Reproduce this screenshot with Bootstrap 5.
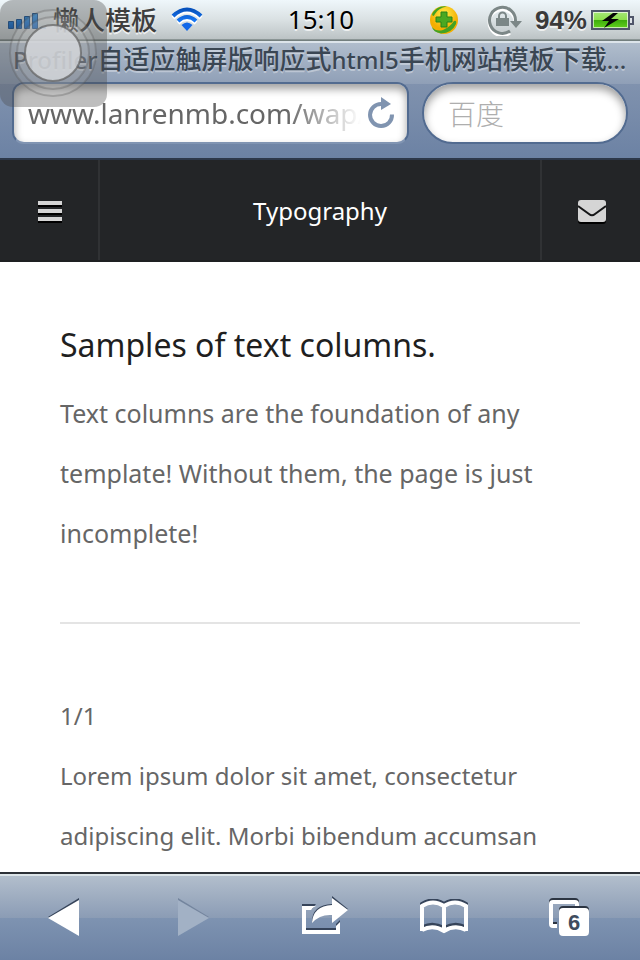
<!DOCTYPE html>
<html lang="zh-CN">
<head>
<meta charset="utf-8">
<meta name="viewport" content="width=device-width, initial-scale=1">
<title>Typography</title>
<link href="https://cdn.jsdelivr.net/npm/bootstrap@5.3.0/dist/css/bootstrap.min.css" rel="stylesheet">
<style>
body { font-family: "Noto Sans", "Noto Sans CJK SC", sans-serif; background: #fff; }
.plain-btn { background: none; border: 0; padding: 0; line-height: 1; }
svg { display: block; flex: none; }
.status-bar { height: 41px; background: linear-gradient(#eff7fb, #d9e0e2 50%, #bcc3c5 95%, #737f7e 97%); text-shadow: 0 2px 0 rgba(255,255,255,.7); padding: 0 6px 2px 8px; }
.status-bar .side { flex: 1 1 0; }
.status-bar .tray { gap: 28px; }
.carrier { font-size: 26px; line-height: 36px; padding: 0 14px 2px 7px; color: #3e3e3e; font-weight: 500; font-family: "Noto Sans CJK SC", sans-serif; }
.clock { font-size: 26px; line-height: 36px; padding-bottom: 2px; color: #000; }
.percent { font: bold 26px/36px "Liberation Sans", sans-serif; color: #3a3a3a; }
.browser-bar { background: linear-gradient(#dce4ea 2px, #b0bdcc 2px, #8f9fb7 43px, #8092ae 43px, #6c82a4); border-bottom: 2px solid #2d384a; }
.page-name { font-size: 24px; line-height: 36px; font-weight: 500; color: #3a4653; text-shadow: 0 2px 0 rgba(255,255,255,.35); padding: 0 12px 4px 13px; }
.page-name bdi { font-size: 26px; }
.fields { padding: 0 12px 14px; gap: 13px; }
.field { height: 62px; background: #fff; border: 2px solid #526b90; border-bottom-color: #8094b2; box-shadow: inset 0 5px 8px rgba(0,0,0,.38); }
.url-field { flex: 2 1 397px; min-width: 0; border-radius: 12px; padding: 0 12px 0 14px; }
.search-field { flex: 1 1 206px; min-width: 0; border-radius: 31px; border-bottom-color: #526b90; padding: 0 24px; }
.field input { width: 100%; min-width: 0; border: 0; background: none; padding: 0; outline: 0; font-size: 28px; line-height: 40px; color: #666; }
.url-field input { -webkit-mask-image: linear-gradient(to right, #000 calc(100% - 80px), transparent calc(100% - 6px)); mask-image: linear-gradient(to right, #000 calc(100% - 80px), transparent calc(100% - 6px)); }
.search-field input { font-weight: 300; font-family: "Noto Sans CJK SC", sans-serif; }
.search-field input::placeholder { color: #aeaeae; opacity: 1; }
.site-head { height: 102px; background: #232527; border-bottom: 2px solid #1e2022; padding-top: 2px; }
.site-head .head-btn { width: 100px; margin-top: -2px; padding: 4px 0 0 2px; }
.site-head .head-btn:first-child { border-right: 2px solid #303234; }
.site-head .head-btn:last-child { border-left: 2px solid #303234; }
.site-head h1 { font-size: 24px; line-height: 60px; color: #fff; font-weight: 400; }
.page-body { min-height: 0; overflow: hidden auto; scrollbar-width: none; padding: 53px 60px 0; color: #666; font-size: 24px; line-height: 60px; }
.page-body h2 { font-size: 32px; line-height: 60px; color: #1f1f1f; font-weight: 400; margin: 0 0 8px; }
.page-body p { margin: 0; }
.page-body .intro { font-size: 25px; }
.page-body hr { margin: 59px 0 62px; border-top: 2px solid #e4e4e4; opacity: 1; }
.tool-bar { display: grid; grid-template-columns: 127fr 132fr 132fr 106fr 143fr; align-items: center; height: 88px; background: linear-gradient(#dce4e8 2px, #b2becc 2px, #8b9cb5 44px, #7e93b1 44px, #6c82a4); border-top: 2px solid #2c3036; }
.tool-bar svg { margin: 0 auto; }
.touch-btn { left: 0; top: 0; z-index: 5; }
</style>
<script src="https://cdn.jsdelivr.net/npm/bootstrap@5.3.0/dist/js/bootstrap.bundle.min.js"></script>
</head>
<body class="vh-100 d-flex flex-column overflow-hidden position-relative">

<div class="status-bar d-flex align-items-center flex-shrink-0">
  <div class="side d-flex align-items-center">
    <svg width="38" height="20" viewBox="0 0 38 20" aria-label="Signal"><defs><linearGradient id="sig" x2="0" y2="1"><stop stop-color="#2d96ec"/><stop offset="1" stop-color="#0a5fc0"/></linearGradient></defs><g fill="url(#sig)" stroke="#144f91"><path d="M.5 11.500h5v7h-5zM8.500 9.500h5v9h-5zM16.500 6.500h5v12h-5zM24.500 3.500h5v15h-5z"/></g><path d="M32 17h6v2h-6z" fill="#367fc9"/></svg>
    <span class="carrier text-nowrap">懒人模板</span>
    <svg width="32" height="26" viewBox="0 0 32 26" aria-label="Wi-Fi"><defs><linearGradient id="wf" x2="0" y2="1"><stop stop-color="#0752bd"/><stop offset="1" stop-color="#1677f5"/></linearGradient></defs><g fill="none" stroke="#fff" stroke-width="4" transform="translate(0 2)"><path d="M2 9Q16-4 30 9M7 14Q16 6 25 14"/></g><g fill="none" stroke="url(#wf)" stroke-width="4"><path d="M2 9Q16-4 30 9M7 14Q16 6 25 14"/></g><path d="M10.500 18Q16 13 21.500 18L16 24z" fill="#1268e8"/></svg>
  </div>
  <span class="clock">15:10</span>
  <div class="side d-flex align-items-center justify-content-end">
    <div class="tray d-flex align-items-center">
    <svg width="30" height="30" viewBox="0 0 30 30" aria-label="Battery saver"><defs><radialGradient id="sun" cy=".3"><stop stop-color="#fff04c"/><stop offset="1" stop-color="#f4ae00"/></radialGradient></defs><circle cx="15" cy="15" r="14" fill="url(#sun)"/><path d="M3 9Q8 0 18 1.500Q9 3 6 9Q4 13 3 9zM27 19Q23 28 12 28.500Q4 27 3 22Q7 27 14 25Q21 22 25 16Q28 15 27 19z" fill="#43a224"/><path d="M12 7h6v5h5v5h-5v5h-6v-5H7v-5h5z" fill="#4aa822" stroke="#268318"/></svg>
    <svg width="36" height="32" viewBox="0 0 36 32" aria-label="Rotation lock"><path d="M23 27A13 13 0 1 1 28 15" transform="translate(0 2)" fill="none" stroke="#fff" stroke-width="3"/><path d="M23 27A13 13 0 1 1 28.500 17" fill="none" stroke="#7c8787" stroke-width="3"/><path d="M23 17h12l-6 7z" fill="#7c8787"/><path d="M9 14h13v8H9z" fill="#7c8787"/><path d="M12 14v-2a3.500 3.500 0 0 1 7 0v2" fill="none" stroke="#7c8787" stroke-width="2"/></svg>
    </div>
    <span class="percent ms-2 ps-1 pe-1">94%</span>
    <svg width="43" height="22" viewBox="0 0 43 22" aria-label="Charging"><defs><linearGradient id="bat" x2="0" y2="1"><stop stop-color="#a8e77e"/><stop offset=".48" stop-color="#8ee04d"/><stop offset=".5" stop-color="#3eac0d"/><stop offset="1" stop-color="#65d51f"/></linearGradient></defs><path d="M1 2h37v18H1z" fill="url(#bat)" stroke="#50566a" stroke-width="2"/><path d="M2.500 3.500h34v15h-34z" fill="none" stroke="#fff" stroke-opacity=".65"/><path d="M39 8h3v7h-3" fill="#dfe4e8" stroke="#50566a" stroke-width="2"/><path d="M22 4L11 12h7l-5 7 15-9h-8l7-6z" fill="#050505"/></svg>
  </div>
</div>

<div class="browser-bar flex-shrink-0">
  <div class="page-name text-nowrap overflow-hidden">Profiler<bdi>自适应触屏版响应式</bdi>html5<bdi>手机网站模板下载</bdi>...</div>
  <div class="fields d-flex">
    <div class="field url-field d-flex align-items-center">
      <input type="text" value="www.lanrenmb.com/wap/" aria-label="Address">
      <button class="plain-btn" type="button" aria-label="Reload"><svg width="28" height="32" viewBox="0 0 28 32"><path d="M25 17.500A11 11 0 1 1 14.500 7" fill="none" stroke="#8094b0" stroke-width="4"/><path d="M14 0l10 7-10 6z" fill="#8094b0"/></svg></button>
    </div>
    <div class="field search-field d-flex align-items-center">
      <input type="text" placeholder="百度" aria-label="Search">
    </div>
  </div>
</div>

<header class="site-head d-flex flex-shrink-0">
  <button class="plain-btn head-btn d-flex align-items-center justify-content-center" type="button" aria-label="Menu"><svg width="24" height="22" viewBox="0 0 24 22"><path d="M0 2h24v4H0zM0 10h24v4H0zM0 18h24v4H0z" fill="#000"/><path d="M0 0h24v4H0zM0 8h24v4H0zM0 16h24v4H0z" fill="#d5d5d5"/></svg></button>
  <h1 class="m-0 flex-fill text-center align-self-center">Typography</h1>
  <button class="plain-btn head-btn d-flex align-items-center justify-content-center" type="button" aria-label="Contact"><svg width="28" height="24" viewBox="0 0 28 24"><rect y="2" width="28" height="22" rx="3" fill="#000"/><rect width="28" height="22" rx="3" fill="#d5d5d5"/><path d="M0 6l11 8q3 2.500 6 0l11-8" fill="none" stroke="#151617" stroke-width="2"/></svg></button>
</header>

<main class="page-body flex-fill">
  <h2>Samples of text columns.</h2>
  <p class="intro">Text columns are the foundation of any template! Without them, the page is just incomplete!</p>
  <hr>
  <p>1/1</p>
  <p>Lorem ipsum dolor sit amet, consectetur adipiscing elit. Morbi bibendum accumsan</p>
</main>

<nav class="tool-bar flex-shrink-0" aria-label="Browser">
  <button class="plain-btn" type="button" aria-label="Back"><svg width="32" height="40" viewBox="0 0 32 40"><path d="M0 20L31 1v36z" fill="#36445a"/><path d="M0 21L31 3v36z" fill="#fff"/></svg></button>
  <button class="plain-btn" type="button" aria-label="Forward" disabled><svg width="32" height="40" viewBox="0 0 32 40"><path d="M1 1l31 19L1 37z" fill="#74859e"/><path d="M1 3l31 18L1 39z" fill="#a2b1c5"/></svg></button>
  <button class="plain-btn" type="button" aria-label="Share"><svg width="46" height="44" viewBox="0 0 46 44"><g fill="#36445a"><path d="M0 9h14l-4 5H0zM4 33h30v-4l4-4v11H4z"/><path d="M30 1l16 13-16 13v-8Q16 17 10 27Q10 10 30 9z"/></g><g fill="#fff"><path d="M0 11h14q-3 1-5 4H4v20h30v-4l4-4v12H0z"/><path d="M30 3l16 12-16 13v-8Q18 19 10 28Q11 11 30 10z"/></g></svg></button>
  <button class="plain-btn" type="button" aria-label="Bookmarks"><svg width="48" height="36" viewBox="0 0 48 36"><g fill="none" stroke-width="4"><path d="M2 29V5Q13-2 24 5Q35-2 46 5v24M3 28q10-5 21 1q11-6 21-1" stroke="#36445a"/><path d="M2 32V7Q13 0 24 7Q35 0 46 7v25M24 6v26M2 31q11-6 22 1q11-7 22-1" stroke="#fff"/></g></svg></button>
  <button class="plain-btn" type="button" aria-label="6 open pages"><svg width="40" height="40" viewBox="0 0 40 40"><rect x="2" y="3" width="26" height="24" rx="2" fill="none" stroke="#2c3542" stroke-width="4"/><rect x="2" y="5" width="26" height="24" rx="2" fill="none" stroke="#fff" stroke-width="4"/><rect x="10" y="9" width="30" height="29" rx="4" fill="#2c3542"/><path d="M8 25h2v8H8z" fill="#7e93b1"/><rect x="10" y="11" width="30" height="28" rx="4" fill="#fff"/><text x="25" y="33" text-anchor="middle" font-family="Liberation Sans, sans-serif" font-weight="700" font-size="22" fill="#3f4c5e">6</text></svg></button>
</nav>

<button class="plain-btn touch-btn position-absolute" type="button" aria-label="AssistiveTouch"><svg width="107" height="107" viewBox="0 0 107 107"><rect width="107" height="107" rx="13" fill="#4b4b4b" fill-opacity=".36"/><g fill="#fff" fill-opacity=".1" stroke="#555" stroke-opacity=".3" stroke-width="2"><circle cx="53" cy="53" r="43"/><circle cx="53" cy="53" r="36"/></g><circle cx="53" cy="53" r="28" fill="#d5d8dc" fill-opacity=".82" stroke="#666" stroke-opacity=".75" stroke-width="2"/></svg></button>

</body>
</html>
